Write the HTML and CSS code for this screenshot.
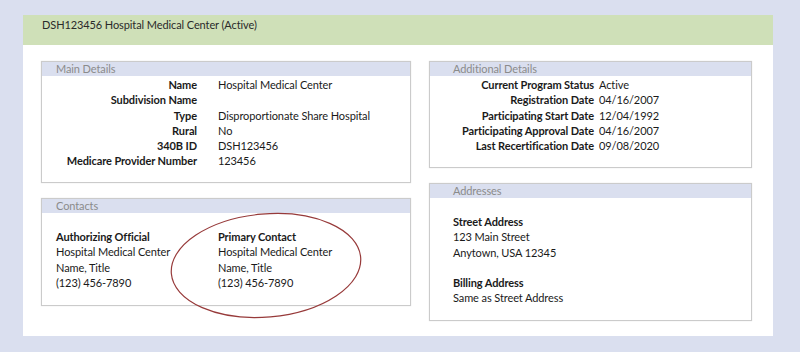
FILE: index.html
```html
<!DOCTYPE html>
<html>
  <head>
    <meta charset="UTF-8">
    <title>DSH123456 Hospital Medical Center</title>
    <link rel="stylesheet" href="styles.css">
  </head>
  <body>
    <div class="page">
      <div class="title-bar">DSH123456 Hospital Medical Center (Active)</div>
      <div class="columns">
        <div class="column left">
          <div class="panel main-details">
            <div class="panel-title">Main Details</div>
            <div class="fields">
              <div class="label">Name</div><div class="value">Hospital Medical Center</div>
              <div class="label">Subdivision Name</div><div class="value"></div>
              <div class="label">Type</div><div class="value">Disproportionate Share Hospital</div>
              <div class="label">Rural</div><div class="value">No</div>
              <div class="label">340B ID</div><div class="value">DSH123456</div>
              <div class="label">Medicare Provider Number</div><div class="value">123456</div>
            </div>
          </div>
          <div class="panel contacts">
            <div class="panel-title">Contacts</div>
            <div class="contact-list">
              <div class="contact">
                <strong>Authorizing Official</strong>
                <span>Hospital Medical Center</span>
                <span>Name, Title</span>
                <span>(123) 456-7890</span>
              </div>
              <div class="contact">
                <strong>Primary Contact</strong>
                <span>Hospital Medical Center</span>
                <span>Name, Title</span>
                <span>(123) 456-7890</span>
              </div>
            </div>
            <svg class="highlight" width="200" height="113" viewBox="0 0 200 113">
              <ellipse cx="100" cy="56.5" rx="95" ry="51.5" transform="rotate(-5 100 56.5)" fill="none" stroke="#973a3a" stroke-width="1.2"/>
            </svg>
          </div>
        </div>
        <div class="column right">
          <div class="panel additional-details">
            <div class="panel-title">Additional Details</div>
            <div class="fields">
              <div class="label">Current Program Status</div><div class="value">Active</div>
              <div class="label">Registration Date</div><div class="value">04/16/2007</div>
              <div class="label">Participating Start Date</div><div class="value">12/04/1992</div>
              <div class="label">Participating Approval Date</div><div class="value">04/16/2007</div>
              <div class="label">Last Recertification Date</div><div class="value">09/08/2020</div>
            </div>
          </div>
          <div class="panel addresses">
            <div class="panel-title">Addresses</div>
            <div class="address-list">
              <strong>Street Address</strong>
              <span>123 Main Street</span>
              <span>Anytown, USA 12345</span>
              <strong class="spaced">Billing Address</strong>
              <span>Same as Street Address</span>
            </div>
          </div>
        </div>
      </div>
    </div>
  </body>
</html>
```

FILE: styles.css
```css
html, body {
  margin: 0;
  padding: 0;
}
body {
  background: #dadfef;
  font: normal 11px/15.25px "Lato", "Open Sans", sans-serif;
  letter-spacing: -0.1px;
  color: #1a1a1a;
}
.page {
  box-sizing: border-box;
  width: 750px;
  height: 321px;
  margin: 15px 0 0 23px;
  background: #fff;
}
.title-bar {
  height: 30px;
  box-sizing: border-box;
  padding: 2px 19px 0;
  background: #cfe0b8;
  color: #2a2a2a;
}
.columns {
  display: flex;
  gap: 18px;
  padding: 16px 0 0 18px;
}
.column {
  display: flex;
  flex-direction: column;
  gap: 15px;
}
.column.left {
  width: 370px;
}
.column.right {
  width: 323px;
}
.panel {
  position: relative;
  box-sizing: border-box;
  border: 1px solid #cbcbcb;
  box-shadow: 0 0 1px rgba(0,0,0,0.15);
}
.panel-title {
  height: 14px;
  line-height: 14px;
  padding-left: 14px;
  background: #dadfef;
  color: #8b8b8b;
}
.additional-details .panel-title,
.addresses .panel-title {
  padding-left: 23px;
}
.fields {
  display: grid;
  column-gap: 21px;
  padding-top: 1px;
}
.fields .label {
  text-align: right;
  font-weight: bold;
}
.main-details {
  height: 122px;
}
.main-details .fields {
  grid-template-columns: 155px auto;
}
.additional-details {
  height: 107px;
}
.additional-details .fields {
  grid-template-columns: 164px auto;
  column-gap: 5px;
}
.contacts {
  height: 108px;
}
.contact-list {
  display: flex;
  padding: 16px 0 0 14px;
}
.contact {
  display: flex;
  flex-direction: column;
  width: 162px;
}
.highlight {
  position: absolute;
  left: 124px;
  top: 10px;
}
.addresses {
  height: 138px;
}
.address-list {
  display: flex;
  flex-direction: column;
  padding: 16px 0 0 23px;
}
.address-list .spaced {
  margin-top: 15.25px;
}
```
